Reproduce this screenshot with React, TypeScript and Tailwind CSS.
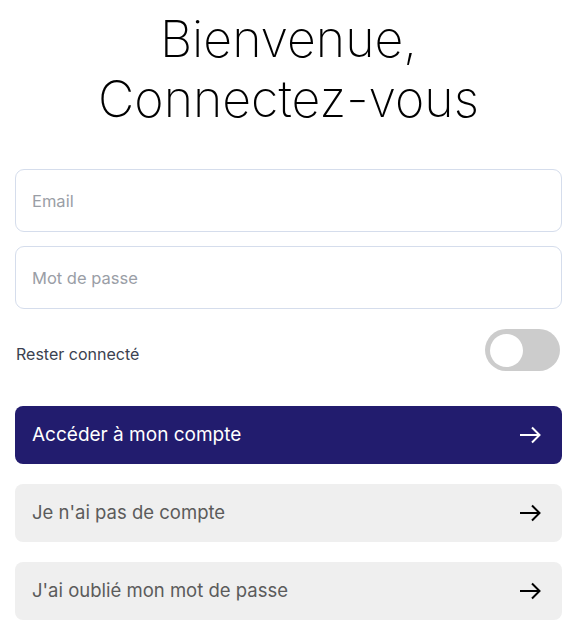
import { useState } from 'react';

function Arrow({ className }: { className?: string }) {
  return (
    <svg width="22" height="18" viewBox="0 0 22 18" fill="none" className={className}>
      <path d="M1 9H20.5M13 1.5L20.5 9L13 16.5" stroke="currentColor" strokeWidth="2" />
    </svg>
  );
}

export default function App() {
  const [remember, setRemember] = useState(false);

  return (
    <div
      className="w-[577px] min-h-[632px] bg-white px-[15px] pt-[9px]"
      style={{ fontFamily: 'Inter, "Noto Sans", sans-serif' }}
    >
      <h1 className="text-center text-[50px] leading-[60px] font-extralight text-black">
        Bienvenue,
        <br />
        Connectez-vous
      </h1>

      <div className="mt-[40px] flex flex-col gap-[14px]">
        <input
          type="email"
          placeholder="Email"
          className="h-[63px] w-full rounded-[9px] border border-[#d5ddec] px-4 text-[16.5px] text-gray-800 placeholder:text-[#9a9ea6] outline-none"
        />
        <input
          type="password"
          placeholder="Mot de passe"
          className="h-[63px] w-full rounded-[9px] border border-[#d5ddec] px-4 text-[16.5px] text-gray-800 placeholder:text-[#9a9ea6] outline-none"
        />
      </div>

      <div className="mt-[20px] flex items-center justify-between">
        <span className="pl-px pt-[8px] text-[16px] text-[#3b4250]">Rester connecté</span>
        <button
          onClick={() => setRemember(!remember)}
          className={`mr-[2px] flex h-[42px] w-[75px] items-center rounded-full px-[5px] transition-colors ${
            remember ? 'bg-[#221c6e] justify-end' : 'bg-[#cccccc] justify-start'
          }`}
        >
          <span className="h-[33px] w-[33px] rounded-full bg-white" />
        </button>
      </div>

      <div className="mt-[35px] flex flex-col gap-[20px]">
        <button className="flex h-[58px] w-full items-center justify-between rounded-[8px] bg-[#221c6e] pl-[17px] pr-[21px] text-[19px] text-white">
          <span>Accéder à mon compte</span>
          <Arrow />
        </button>
        <button className="flex h-[58px] w-full items-center justify-between rounded-[8px] bg-[#efefef] pl-[17px] pr-[21px] text-[18.5px] text-[#5b5b5b]">
          <span>Je n'ai pas de compte</span>
          <Arrow className="text-black" />
        </button>
        <button className="flex h-[58px] w-full items-center justify-between rounded-[8px] bg-[#efefef] pl-[17px] pr-[21px] text-[18.5px] text-[#5b5b5b]">
          <span>J'ai oublié mon mot de passe</span>
          <Arrow className="text-black" />
        </button>
      </div>
    </div>
  );
}
